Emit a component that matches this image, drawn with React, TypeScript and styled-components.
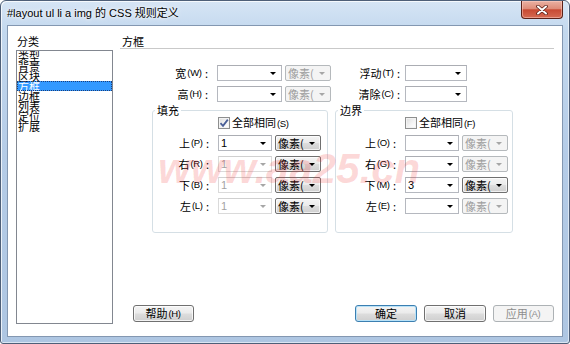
import React from "react";
import styled, { createGlobalStyle, css } from "styled-components";

const GlobalStyle = createGlobalStyle`
	html, body {
		margin: 0;
		padding: 0;
		background: #fff;
	}
	body {
		font-family: "Noto Sans CJK SC", "Liberation Sans", sans-serif;
		font-size: 11px;
		color: #000;
	}
	* {
		box-sizing: border-box;
	}
`;

const Window = styled.div`
	width: 570px;
	height: 344px;
	display: flex;
	flex-direction: column;
	padding: 0 6px 6px 6px;
	border: 1px solid #4e5f78;
	border-radius: 6px 6px 3px 3px;
	background: linear-gradient(180deg, #d6e5f5 0%, #c3d8ee 9%, #b5cce7 45%, #aec6e2 100%);
	box-shadow: inset 1px 1px 0 rgba(255, 255, 255, 0.75), inset -1px -1px 0 rgba(255, 255, 255, 0.55);
	overflow: hidden;
`;

const TitleBar = styled.div`
	height: 24px;
	display: flex;
	justify-content: space-between;
	align-items: center;
`;

const Title = styled.span`
	font-family: "Liberation Sans", "Noto Sans CJK SC", sans-serif;
	font-size: 11px;
	line-height: 24px;
	text-shadow: 0 0 6px #fff, 0 0 3px #fff;
`;

const CloseButton = styled.div`
	align-self: flex-start;
	width: 42px;
	height: 18px;
	display: flex;
	align-items: center;
	justify-content: center;
	border: 1px solid #5b2118;
	border-top: none;
	border-radius: 0 0 4px 4px;
	background: linear-gradient(180deg, #eab1a3 0%, #de8c79 45%, #c84a33 52%, #d56a52 100%);
	box-shadow: inset 0 0 0 1px rgba(255, 210, 200, 0.5);
`;

const Client = styled.div`
	position: relative;
	flex: 1;
	display: flex;
	gap: 7px;
	padding: 9px 8px 12px 8px;
	border: 1px solid #8397b1;
	background: #fff;
	overflow: hidden;
`;

const LeftColumn = styled.div`
	width: 97px;
	display: flex;
	flex-direction: column;
`;

const SmallLabel = styled.div`
	height: 15px;
	line-height: 13px;
	padding-left: 1px;
`;

const CategoryList = styled.div`
	flex: 1;
	border: 1px solid #828790;
	background: #fff;
`;

const CategoryItem = styled.div<{ $selected?: boolean }>`
	height: 10px;
	line-height: 10px;
	padding-left: 1px;
	white-space: nowrap;
	${(p) =>
		p.$selected &&
		css`
			background: #3399ff;
			color: #fff;
			outline: 1px dotted #1d3e78;
			outline-offset: -1px;
		`}
`;

const RightColumn = styled.div`
	flex: 1;
	display: flex;
	flex-direction: column;
`;

const Heading = styled.div`
	height: 14px;
	line-height: 13px;
	padding-left: 2px;
	border-bottom: 1px solid #c9c9c9;
`;

const TopGrid = styled.div`
	margin-top: 16px;
	display: grid;
	grid-template-columns: 94px 65px 46px 68px 62px;
	grid-auto-rows: 16px;
	column-gap: 3px;
	row-gap: 5px;
`;

const FieldLabel = styled.div<{ $pad?: number }>`
	display: flex;
	align-items: center;
	justify-content: flex-end;
	padding-right: ${(p) => p.$pad ?? 6}px;
	white-space: nowrap;
	line-height: 16px;
`;

const Key = styled.span`
	font-family: "Liberation Sans", sans-serif;
	font-size: 9.5px;
	letter-spacing: -0.4px;
	margin: 0 1px;
`;

const Combo = styled.div<{ $disabled?: boolean }>`
	display: flex;
	align-items: center;
	height: 16px;
	padding-left: 2px;
	border: 1px solid ${(p) => (p.$disabled ? "#dadada" : "#b5b8bf")};
	border-top-color: ${(p) => (p.$disabled ? "#d0d0d0" : "#abadb3")};
	background: #fff;
	color: ${(p) => (p.$disabled ? "#a3a3a3" : "#000")};
`;

const ComboText = styled.span`
	flex: 1;
	font-family: "Liberation Sans", sans-serif;
	font-size: 11px;
	line-height: 14px;
`;

const Arrow = styled.span<{ $disabled?: boolean }>`
	width: 0;
	height: 0;
	margin-right: 5px;
	border-left: 3px solid transparent;
	border-right: 3px solid transparent;
	border-top: 3px solid ${(p) => (p.$disabled ? "#a6a6a6" : "#000")};
`;

const UnitSelect = styled.div<{ $disabled?: boolean }>`
	display: flex;
	align-items: center;
	height: 16px;
	padding-left: 2px;
	border-radius: 2px;
	border: 1px solid ${(p) => (p.$disabled ? "#b5b9bc" : "#707070")};
	background: ${(p) =>
		p.$disabled
			? "#f4f4f4"
			: "linear-gradient(180deg, #f4f4f4 0%, #ebebeb 48%, #dddddd 52%, #cfcfcf 100%)"};
	color: ${(p) => (p.$disabled ? "#9e9e9e" : "#000")};
	box-shadow: ${(p) => (p.$disabled ? "none" : "inset 0 0 0 1px rgba(255, 255, 255, 0.7)")};
`;

const UnitText = styled.span`
	flex: 1;
	line-height: 14px;
	white-space: nowrap;
	overflow: hidden;
`;

const Groups = styled.div`
	margin-top: 2px;
	padding-left: 32px;
	display: flex;
	gap: 7px;
`;

const GroupBox = styled.fieldset<{ $width: number }>`
	width: ${(p) => p.$width}px;
	margin: 0;
	padding: 0 0 18px 0;
	border: 1px solid #d5dfe5;
	border-radius: 3px;
	min-inline-size: 0;
`;

const Legend = styled.legend`
	margin-left: 2px;
	padding: 0 2px;
	line-height: 12px;
	font-size: 11px;
`;

const GroupGrid = styled.div<{ $labelWidth: number }>`
	display: grid;
	grid-template-columns: ${(p) => p.$labelWidth}px 54px 46px;
	grid-template-rows: 14px repeat(4, 16px);
	column-gap: 3px;
	row-gap: 5px;
`;

const CheckRow = styled.label`
	grid-column: 2 / 4;
	display: flex;
	align-items: center;
	gap: 2px;
	white-space: nowrap;
	line-height: 14px;
`;

const CheckBox = styled.span`
	width: 12px;
	height: 12px;
	display: flex;
	align-items: center;
	justify-content: center;
	border: 1px solid #8e8f8f;
	background: linear-gradient(135deg, #dcdcdc 0%, #f6f6f6 60%, #ffffff 100%);
	box-shadow: inset 0 0 0 1px #f3f3f3;
`;

const ButtonRow = styled.div`
	margin-top: auto;
	margin-bottom: 2px;
	padding-left: 13px;
	display: flex;
	gap: 7px;
`;

const Spacer = styled.div`
	flex: 1;
`;

const DialogButton = styled.div<{ $width: number; $default?: boolean; $disabled?: boolean }>`
	width: ${(p) => p.$width}px;
	height: 17px;
	display: flex;
	align-items: center;
	justify-content: center;
	border-radius: 3px;
	border: 1px solid #707070;
	background: linear-gradient(180deg, #f4f4f4 0%, #ebebeb 48%, #dddddd 52%, #cfcfcf 100%);
	box-shadow: inset 0 0 0 1px rgba(255, 255, 255, 0.75);
	line-height: 15px;
	white-space: nowrap;
	${(p) =>
		p.$default &&
		css`
			border-color: #3c7fb1;
			box-shadow: inset 0 0 0 1px #b8e2f8;
		`}
	${(p) =>
		p.$disabled &&
		css`
			border-color: #adb2b5;
			background: #f4f4f4;
			box-shadow: none;
			color: #8d8d8d;
		`}
`;

const Watermark = styled.div`
	position: absolute;
	left: 150px;
	top: 122px;
	font-family: "Liberation Sans", sans-serif;
	font-weight: bold;
	font-style: italic;
	font-size: 42px;
	line-height: 42px;
	color: rgba(240, 50, 50, 0.19);
	pointer-events: none;
	white-space: nowrap;
`;

type Row = {
	label: string;
	accel: string;
	value: string;
	comboDisabled?: boolean;
	unitDisabled?: boolean;
};

const paddingRows: Row[] = [
	{ label: "上", accel: "P", value: "1" },
	{ label: "右", accel: "R", value: "1", comboDisabled: true },
	{ label: "下", accel: "B", value: "1", comboDisabled: true },
	{ label: "左", accel: "L", value: "1", comboDisabled: true },
];

const marginRows: Row[] = [
	{ label: "上", accel: "O", value: "", unitDisabled: true },
	{ label: "右", accel: "G", value: "", unitDisabled: true },
	{ label: "下", accel: "M", value: "3" },
	{ label: "左", accel: "E", value: "", unitDisabled: true },
];

const categories = ["类型", "背景", "区块", "方框", "边框", "列表", "定位", "扩展"];

const Label = ({ text, accel, pad }: { text: string; accel: string; pad?: number }) => (
	<FieldLabel $pad={pad}>
		{text}
		<Key>({accel})</Key>
		&nbsp;:
	</FieldLabel>
);

const ComboBox = ({ value, disabled }: { value: string; disabled?: boolean }) => (
	<Combo $disabled={disabled}>
		<ComboText>{value}</ComboText>
		<Arrow $disabled={disabled} />
	</Combo>
);

const Unit = ({ disabled }: { disabled?: boolean }) => (
	<UnitSelect $disabled={disabled}>
		<UnitText>像素(</UnitText>
		<Arrow $disabled={disabled} />
	</UnitSelect>
);

const Check = ({ checked }: { checked?: boolean }) => (
	<CheckBox>
		{checked && (
			<svg width="10" height="10" viewBox="0 0 10 10">
				<path d="M1.5 5.2 L4 7.8 L8.8 1.6" fill="none" stroke="#4a5f97" strokeWidth="1.8" />
			</svg>
		)}
	</CheckBox>
);

const Group = ({
	title,
	width,
	labelWidth,
	checkLabel,
	checkKey,
	checked,
	rows,
}: {
	title: string;
	width: number;
	labelWidth: number;
	checkLabel: string;
	checkKey: string;
	checked?: boolean;
	rows: Row[];
}) => (
	<GroupBox $width={width}>
		<Legend>{title}</Legend>
		<GroupGrid $labelWidth={labelWidth}>
			<CheckRow>
				<Check checked={checked} />
				<span>
					{checkLabel}
					<Key>({checkKey})</Key>
				</span>
			</CheckRow>
			{rows.map((r) => (
				<React.Fragment key={r.accel}>
					<Label text={r.label} accel={r.accel} />
					<ComboBox value={r.value} disabled={r.comboDisabled} />
					<Unit disabled={r.unitDisabled} />
				</React.Fragment>
			))}
		</GroupGrid>
	</GroupBox>
);

const App = () => {
	return (
		<>
			<GlobalStyle />
			<Window>
				<TitleBar>
					<Title>#layout ul li a img 的 CSS 规则定义</Title>
					<CloseButton>
						<svg width="12" height="10" viewBox="0 0 12 10">
							<path d="M2 1.5 L10 8.5 M10 1.5 L2 8.5" stroke="#5a1f17" strokeWidth="3.6" strokeLinecap="round" />
							<path d="M2 1.5 L10 8.5 M10 1.5 L2 8.5" stroke="#fff" strokeWidth="2" strokeLinecap="round" />
						</svg>
					</CloseButton>
				</TitleBar>
				<Client>
					<LeftColumn>
						<SmallLabel>分类</SmallLabel>
						<CategoryList>
							{categories.map((c) => (
								<CategoryItem key={c} $selected={c === "方框"}>
									{c}
								</CategoryItem>
							))}
						</CategoryList>
					</LeftColumn>
					<RightColumn>
						<Heading>方框</Heading>
						<TopGrid>
							<Label text="宽" accel="W" />
							<ComboBox value="" />
							<Unit disabled />
							<Label text="浮动" accel="T" pad={2} />
							<ComboBox value="" />
							<Label text="高" accel="H" />
							<ComboBox value="" />
							<Unit disabled />
							<Label text="清除" accel="C" pad={2} />
							<ComboBox value="" />
						</TopGrid>
						<Groups>
							<Group
								title="填充"
								width={176}
								labelWidth={62}
								checkLabel="全部相同"
								checkKey="S"
								checked
								rows={paddingRows}
							/>
							<Group
								title="边界"
								width={178}
								labelWidth={66}
								checkLabel="全部相同"
								checkKey="F"
								rows={marginRows}
							/>
						</Groups>
						<ButtonRow>
							<DialogButton $width={61}>
								帮助<Key>(H)</Key>
							</DialogButton>
							<Spacer />
							<DialogButton $width={62} $default>
								确定
							</DialogButton>
							<DialogButton $width={62}>取消</DialogButton>
							<DialogButton $width={61} $disabled>
								应用<Key>(A)</Key>
							</DialogButton>
						</ButtonRow>
					</RightColumn>
					<Watermark>www.aa25.cn</Watermark>
				</Client>
			</Window>
		</>
	);
};

export default App;
